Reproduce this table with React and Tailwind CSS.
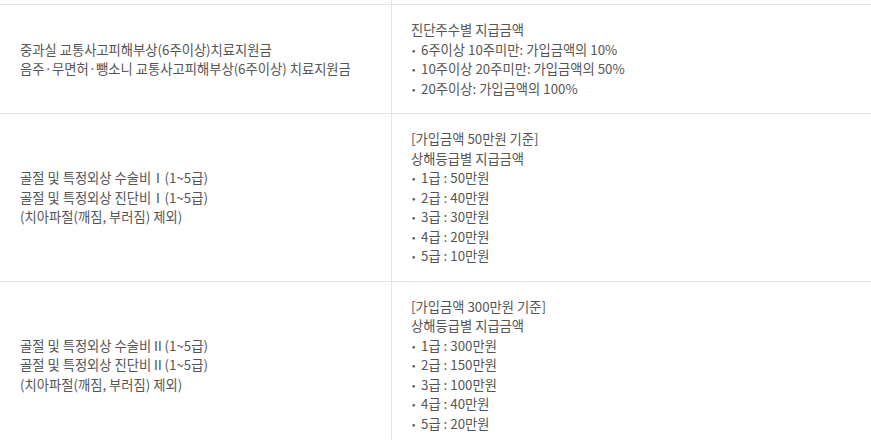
import React from 'react';

const rows = [
  {
    left: ['중과실 교통사고피해부상(6주이상)치료지원금', '음주·무면허·뺑소니 교통사고피해부상(6주이상) 치료지원금'],
    head: ['진단주수별 지급금액'],
    items: ['6주이상 10주미만: 가입금액의 10%', '10주이상 20주미만: 가입금액의 50%', '20주이상: 가입금액의 100%']
  },
  {
    left: ['골절 및 특정외상 수술비Ⅰ(1~5급)', '골절 및 특정외상 진단비Ⅰ(1~5급)', '(치아파절(깨짐, 부러짐) 제외)'],
    head: ['[가입금액 50만원 기준]', '상해등급별 지급금액'],
    items: ['1급 : 50만원', '2급 : 40만원', '3급 : 30만원', '4급 : 20만원', '5급 : 10만원']
  },
  {
    left: ['골절 및 특정외상 수술비Ⅱ(1~5급)', '골절 및 특정외상 진단비Ⅱ(1~5급)', '(치아파절(깨짐, 부러짐) 제외)'],
    head: ['[가입금액 300만원 기준]', '상해등급별 지급금액'],
    items: ['1급 : 300만원', '2급 : 150만원', '3급 : 100만원', '4급 : 40만원', '5급 : 20만원']
  }
];

const App = () => {
  return (
    <div className="w-[871px] h-[440px] overflow-hidden bg-white text-[13.3px] leading-[19.5px] text-[#555] font-['Noto_Sans_CJK_KR',sans-serif]">
      {/* tail of previous row */}
      <div className="flex h-[5px] border-b border-[#e5e5e5]">
        <div className="w-[392px] border-r border-[#e5e5e5]" />
        <div className="flex-1" />
      </div>

      {rows.map((row, i) => (
        <div key={i} className="flex border-b border-[#e5e5e5]">
          <div className="w-[392px] shrink-0 border-r border-[#e5e5e5] pl-[20px] pr-4 py-[15px] flex flex-col justify-center">
            {row.left.map((t) => (
              <div key={t}>{t}</div>
            ))}
          </div>
          <div className="flex-1 pl-[19px] pr-4 py-[15px]">
            {row.head.map((t) => (
              <div key={t}>{t}</div>
            ))}
            {row.items.map((t) => (
              <div key={t} className="flex">
                <span className="w-[10px] shrink-0 pl-[1px] text-[10px]">•</span>
                <span>{t}</span>
              </div>
            ))}
          </div>
        </div>
      ))}
    </div>
  );
};

export default App;
